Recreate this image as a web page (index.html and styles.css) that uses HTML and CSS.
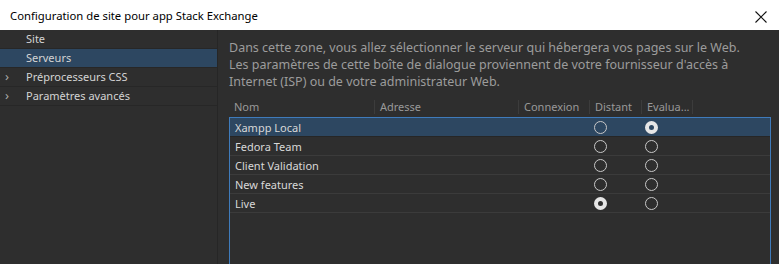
FILE: index.html
```html
<html>
<head><title>Configuration de site</title>
<link rel="stylesheet" href="styles.css">
</head>
<body>
<div class="titlebar">
	<span class="title">Configuration de site pour app Stack Exchange</span>
	<svg class="close" width="12" height="12" viewBox="0 0 12 12"><path d="M0.5 0.5L11.5 11.5M11.5 0.5L0.5 11.5" stroke="#111" stroke-width="1.1"/></svg>
</div>
<div class="body">
	<div class="sidebar">
		<div class="nav"><span class="chev"></span>Site</div>
		<div class="nav active"><span class="chev"></span>Serveurs</div>
		<div class="nav"><span class="chev">&#8250;</span>Préprocesseurs CSS</div>
		<div class="nav"><span class="chev">&#8250;</span>Paramètres avancés</div>
	</div>
	<div class="main">
		<p class="intro">Dans cette zone, vous allez sélectionner le serveur qui hébergera vos pages sur le Web.<br>
		Les paramètres de cette boîte de dialogue proviennent de votre fournisseur d'accès à<br>
		Internet (ISP) ou de votre administrateur Web.</p>
		<div class="head">
			<span class="c-nom">Nom</span>
			<span class="c-adr">Adresse</span>
			<span class="c-con">Connexion</span>
			<span class="c-dist">Distant</span>
			<span class="c-eval">Evalua...</span>
		</div>
		<div class="list">
			<div class="row sel"><span class="c-name">Xampp Local</span><span class="radio"></span><span class="radio on"></span></div>
			<div class="row"><span class="c-name">Fedora Team</span><span class="radio"></span><span class="radio"></span></div>
			<div class="row"><span class="c-name">Client Validation</span><span class="radio"></span><span class="radio"></span></div>
			<div class="row"><span class="c-name">New features</span><span class="radio"></span><span class="radio"></span></div>
			<div class="row"><span class="c-name">Live</span><span class="radio on"></span><span class="radio"></span></div>
		</div>
	</div>
</div>
</body>
</html>
```
FILE: styles.css
```css
body {
	margin:0px;
	background-color:#2e2e2e;
	font-family: "Noto Sans", "Open Sans", sans-serif;
	font-size:11px;
	overflow:hidden;
	height:264px;
}

.titlebar {
	height:30px;
	background-color:#fff;
	display:flex;
	align-items:center;
	justify-content:space-between;
	padding:0px 12px 0px 10px;
	color:#000;
	font-size:11.3px;
}
.close {
	margin-top:4px;
}

.body {
	display:flex;
	height:234px;
	overflow:hidden;
}

.sidebar {
	width:217px;
	border-right:1px solid #262626;
	background-color:#2e2e2e;
}
.nav {
	height:18px;
	line-height:17px;
	border-bottom:1px solid #272727;
	color:#d4d4d4;
	display:flex;
}
.nav.active {
	background-color:#2d4761;
}
.chev {
	width:26px;
	padding-left:5px;
	box-sizing:border-box;
	color:#aaa;
	font-size:13px;
}

.main {
	flex:1;
	padding:9px 8px 0px 11px;
	overflow:hidden;
}
.intro {
	margin:0px;
	color:#9c9c9c;
	font-size:12.5px;
	line-height:17px;
}

.head {
	display:flex;
	margin-top:8px;
	height:19px;
	color:#999;
}
.head span {
	padding-left:5px;
	box-sizing:border-box;
	border-right:1px solid #3c3c3c;
	height:14px;
	line-height:14px;
	margin-top:2px;
}
.c-nom { width:146px; }
.c-adr { width:144px; }
.c-con { width:71px; }
.c-dist { width:52px; }
.c-eval { width:51px; }

.list {
	border:1px solid #3f7bbb;
	border-bottom:none;
	height:200px;
}
.row {
	height:18px;
	border-bottom:1px solid #3b3b3b;
	display:flex;
	align-items:center;
	color:#d8d8d8;
}
.row.sel {
	background-color:#2d4761;
	border-bottom-color:#262626;
}
.c-name {
	width:364px;
	padding-left:5px;
	margin-right:-5px;
}
.radio {
	width:11px;
	height:11px;
	border:1.2px solid #c8c8c8;
	border-radius:50%;
	margin-right:37.6px;
}
.radio.on {
	border:4px solid #e6e6e6;
	width:5px;
	height:5px;
	background-color:#2e2e2e;
}
.sel .radio.on {
	background-color:#2d4761;
}
```
